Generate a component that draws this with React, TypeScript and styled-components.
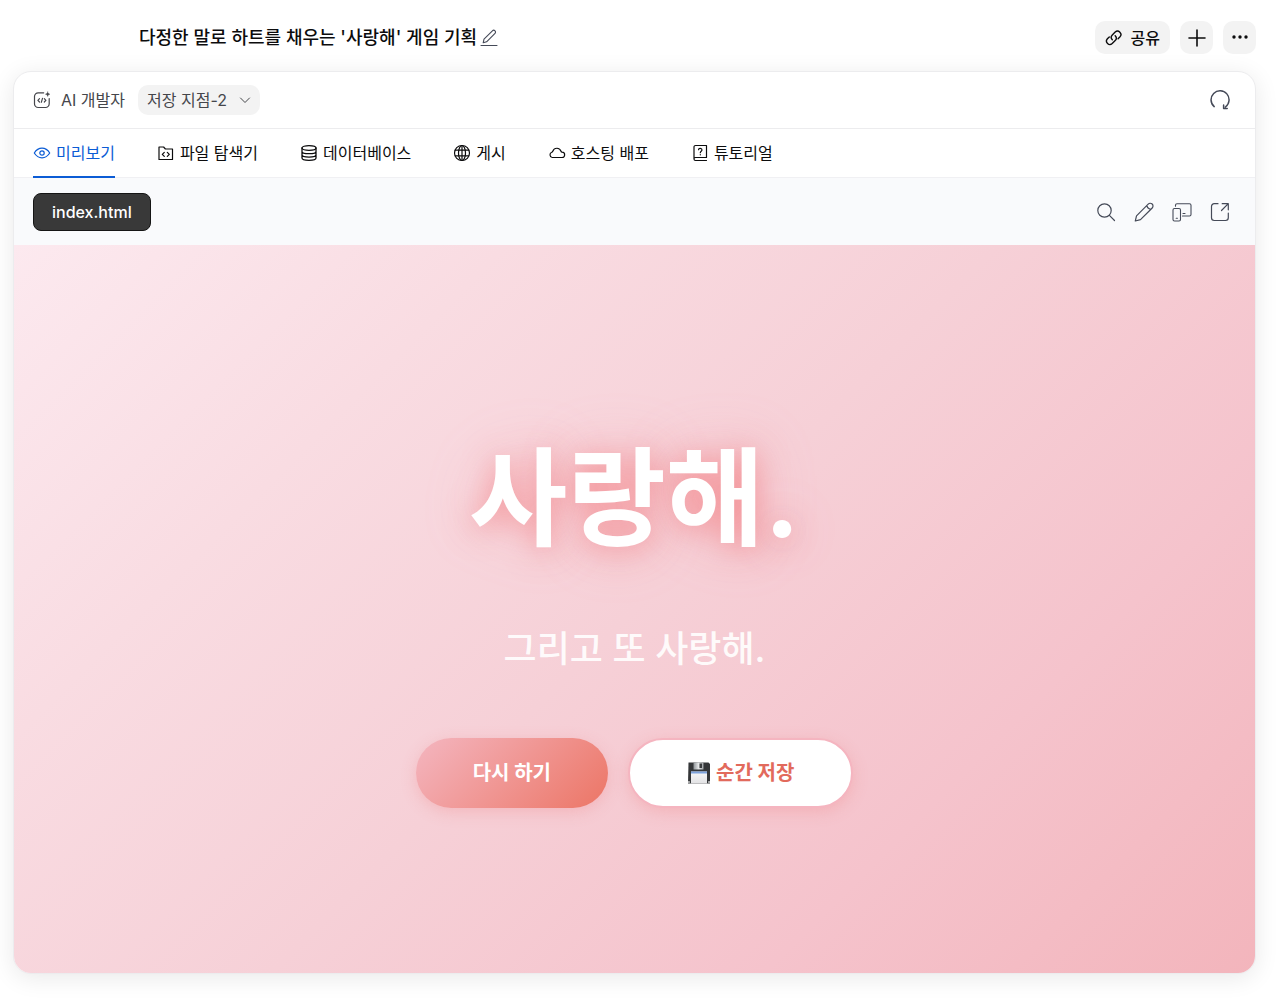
import React from "react";
import styled, { createGlobalStyle } from "styled-components";

const GlobalStyle = createGlobalStyle`
  *, *::before, *::after { box-sizing: border-box; }
  body {
    margin: 0;
    background: #ffffff;
    color: #0c0c0d;
    font-family: Inter, "Noto Sans CJK KR", sans-serif;
    font-size: 16px;
    line-height: 24px;
  }
  button, select { font: inherit; color: inherit; }
`;

const Page = styled.div`
  display: flex;
  flex-direction: column;
  min-height: 100vh;
  padding: 0 24px 29px 13px;
`;

const TopBar = styled.header`
  display: flex;
  align-items: center;
  justify-content: space-between;
  height: 71px;
  padding: 4px 0 0 126px;
`;

const TitleGroup = styled.div`
  display: flex;
  align-items: center;
  gap: 3px;
`;

const PageTitle = styled.h1`
  margin: 0;
  font-size: 18px;
  font-weight: 500;
  line-height: 24px;
`;

const IconButton = styled.button<{ $size?: number }>`
  display: grid;
  place-items: center;
  width: ${(p) => p.$size ?? 20}px;
  height: ${(p) => p.$size ?? 20}px;
  padding: 0;
  border: 0;
  background: none;
  color: #454a58;
  cursor: pointer;
`;

const Actions = styled.div<{ $gap: number }>`
  display: flex;
  align-items: center;
  gap: ${(p) => p.$gap}px;
`;

const SoftButton = styled.button<{ $wide?: boolean }>`
  display: flex;
  align-items: center;
  justify-content: center;
  gap: 8px;
  min-width: 33px;
  height: 33px;
  padding: 0 ${(p) => (p.$wide ? 10 : 0)}px;
  border: 0;
  border-radius: 10px;
  background: #f3f3f3;
  font-weight: 500;
  cursor: pointer;
`;

const Panel = styled.main`
  display: flex;
  flex: 1;
  flex-direction: column;
  overflow: hidden;
  border: 1px solid #ececee;
  border-radius: 18px;
  background: #ffffff;
  box-shadow: 0 4px 24px rgba(0, 0, 0, 0.09);
`;

const PanelHeader = styled.div`
  display: flex;
  align-items: center;
  justify-content: space-between;
  height: 57px;
  padding: 0 25px 0 19px;
  border-bottom: 1px solid #ececee;
`;

const AgentGroup = styled.div`
  display: flex;
  align-items: center;
  gap: 10px;
  color: #45464b;
`;

const SaveField = styled.div`
  display: grid;
  align-items: center;
  margin-left: 3px;
  border-radius: 10px;
  background: #f3f3f3;

  > * { grid-area: 1 / 1; }
  > svg { justify-self: end; margin-right: 9px; pointer-events: none; }
`;

const SaveSelect = styled.select`
  width: 122px;
  height: 30px;
  padding: 0 28px 0 9px;
  border: 0;
  border-radius: 10px;
  background: transparent;
  appearance: none;
  cursor: pointer;
`;

const TabBar = styled.div`
  display: flex;
  gap: 42px;
  height: 49px;
  padding: 0 19px;
  border-bottom: 1px solid #f0f0f3;
`;

const Tab = styled.button<{ $active?: boolean }>`
  display: flex;
  align-items: center;
  gap: 5px;
  height: 49px;
  padding: 0;
  border: 0;
  border-bottom: 2px solid ${(p) => (p.$active ? "#0b5cd5" : "transparent")};
  background: none;
  color: ${(p) => (p.$active ? "#0b5cd5" : "#0c0c0d")};
  white-space: nowrap;
  cursor: pointer;
`;

const FileBar = styled.div`
  display: flex;
  align-items: center;
  justify-content: space-between;
  height: 67px;
  padding: 0 25px 0 19px;
  background: #f9fafc;
`;

const FileButton = styled.button`
  height: 38px;
  padding: 0 18px;
  border: 1px solid #151515;
  border-radius: 8px;
  background: #393939;
  color: #ffffff;
  font-weight: 500;
  cursor: pointer;
`;

const Preview = styled.section`
  display: flex;
  flex: 1;
  flex-direction: column;
  align-items: center;
  justify-content: center;
  padding: 32px;
  background: linear-gradient(135deg, #fce9ef 0%, #f9dce2 25%, #f6d0d7 50%, #f5c3cc 75%, #f3b5bc 100%);
  color: #ffffff;
  text-align: center;
`;

const Headline = styled.h2`
  margin: 0 0 38px;
  padding-top: 2px;
  font-size: 107px;
  font-weight: 700;
  line-height: 172px;
  text-shadow: 0 4px 30px rgba(240, 90, 90, 0.55), 0 0 60px rgba(244, 160, 175, 0.3);
`;

const Subline = styled.p`
  margin: 0 0 62px;
  font-size: 36px;
  font-weight: 500;
  line-height: 54px;
  opacity: 0.9;
`;

const PillButton = styled.button<{ $outlined?: boolean }>`
  display: flex;
  align-items: center;
  gap: 5px;
  height: 70px;
  padding: 0 57px;
  border: ${(p) => (p.$outlined ? "2px solid #f5b5c0" : "0")};
  border-radius: 35px;
  background: ${(p) => (p.$outlined ? "#ffffff" : "linear-gradient(135deg, #f4b6c0, #ec7565)")};
  color: ${(p) => (p.$outlined ? "#e26a5c" : "#ffffff")};
  box-shadow: 0 4px 15px rgba(240, 128, 128, 0.3);
  font-size: 20px;
  font-weight: 700;
  white-space: nowrap;
  cursor: pointer;
`;

type IconProps = { size?: number; width?: number; children: React.ReactNode };

function Icon({ size = 18, width = 1.2, children }: IconProps) {
  return (
    <svg
      width={size}
      height={size}
      viewBox={`0 0 ${size} ${size}`}
      fill="none"
      stroke="currentColor"
      strokeWidth={width}
      strokeLinecap="round"
      strokeLinejoin="round"
      aria-hidden="true"
    >
      {children}
    </svg>
  );
}

const EditIcon = () => (
  <Icon size={18} width={1.1}>
    <path d="M3.200 13.800 4 10.200l8.400-8.400a1.800 1.800 0 0 1 2.600 2.600l-8.400 8.400ZM1 16.500h16" />
  </Icon>
);
const LinkIcon = () => (
  <Icon size={18} width={1.400}>
    <path d="M7.300 10.700a3.400 3.400 0 0 1 0-4.800l2.900-2.900A3.400 3.400 0 0 1 15 7.800l-1.900 1.900" />
    <path d="M10.200 6.800a3.400 3.400 0 0 1 0 4.800l-3 3a3.400 3.400 0 0 1-4.800-4.800l1.900-1.900" />
  </Icon>
);
const PlusIcon = () => (
  <Icon size={18} width={1.6}><path d="M9 1v16M1 9h16" /></Icon>
);
const MoreIcon = () => (
  <Icon size={18}>
    <g fill="currentColor" stroke="none">
      <circle cx="3" cy="8" r="1.700" /><circle cx="9" cy="8" r="1.700" /><circle cx="15" cy="8" r="1.700" />
    </g>
  </Icon>
);
const AgentIcon = () => (
  <Icon size={18} width={1.200}>
    <path d="M10.700 1.800H5.200A3.700 3.700 0 0 0 1.500 5.500v7.300a3.700 3.700 0 0 0 3.700 3.700h7.300a3.700 3.700 0 0 0 3.700-3.700V7.600" />
    <path d="m6.500 7.600-1.600 1.700 1.600 1.700M11.300 7.600l1.600 1.700-1.600 1.700M9.500 7.300l-1.200 4" />
    <path d="M14.700.8c.3 1.500.8 2 2.300 2.400-1.500.3-2 .8-2.300 2.400-.3-1.600-.9-2.100-2.400-2.400 1.500-.4 2.100-.9 2.400-2.400Z" fill="currentColor" strokeWidth=".3" />
  </Icon>
);
const ChevronIcon = () => (
  <Icon size={12} width={1}><path d="m1.500 4 4.500 4.500L10.500 4" /></Icon>
);
const RefreshIcon = () => (
  <Icon size={20} width={1.500}>
    <path d="M4.200 16.600A9 9 0 1 1 15.400 17M13.600 15v3.600h3.600" />
  </Icon>
);
const EyeIcon = () => (
  <Icon size={18} width={1.200}>
    <path d="M1.300 9C3.300 5.800 6 4.200 9 4.200S14.700 5.800 16.700 9C14.700 12.200 12 13.800 9 13.800S3.300 12.200 1.300 9Z" />
    <circle cx="9" cy="9" r="2.200" />
  </Icon>
);
const FolderIcon = () => (
  <Icon size={18}>
    <path d="M2 15.500V3h4.600l1.800 2H15.500v10.500ZM7.300 8.300l-2 2 2 2M10.300 8.300l2 2-2 2" />
  </Icon>
);
const DatabaseIcon = () => (
  <Icon size={18} width={1.300}>
    <ellipse cx="9" cy="4" rx="7" ry="2.300" />
    <path d="M2 4v10c0 1.300 3.100 2.300 7 2.300s7-1 7-2.300V4M2 7.400c0 1.300 3.100 2.300 7 2.300s7-1 7-2.300M2 10.800c0 1.300 3.100 2.300 7 2.300s7-1 7-2.300" />
  </Icon>
);
const GlobeIcon = () => (
  <Icon size={18}>
    <circle cx="9" cy="9" r="7.500" />
    <ellipse cx="9" cy="9" rx="3.500" ry="7.500" />
    <path d="M2.300 6.200h13.400M2.300 11.800h13.400M9 1.500v15" />
  </Icon>
);
const CloudIcon = () => (
  <Icon size={18}>
    <path d="M4.200 13.500h9.600a2.700 2.700 0 0 0 .3-5.400c-.7-.1-.9-.3-1.100-.9A4.300 4.300 0 0 0 4.900 7c-.2.800-.5 1.100-1.100 1.300a2.700 2.700 0 0 0 .4 5.200Z" />
  </Icon>
);
const TutorialIcon = () => (
  <Icon size={18}>
    <path d="M15.500 13.500v-12h-11A1.500 1.500 0 0 0 3 3v12c0 1 .6 1.500 1.500 1.500h11M3 14.700c.1-.8.700-1.200 1.500-1.200h11" />
    <path d="M7.500 5.700C7.700 3.800 11 4 11 6c0 1.200-1.700 1.300-1.700 2.700M9.300 10.700v.1" />
  </Icon>
);
const SearchIcon = () => (
  <Icon size={20}><circle cx="8.500" cy="8.500" r="6.700" /><path d="m13.400 13.400 5.100 5.100" /></Icon>
);
const PencilIcon = () => (
  <Icon size={20}>
    <path d="M1.300 19 2.500 13.800 14.200 2.100a2.700 2.700 0 0 1 4 3.900L6.500 17.700ZM12.900 3.400c.3 2.100 1.700 3.500 3.900 3.900" />
  </Icon>
);
const DevicesIcon = () => (
  <Icon size={20} width={1.100}>
    <path d="M3.500 4.300V3.200c0-.9.600-1.500 1.500-1.500h12.500c.9 0 1.500.6 1.500 1.500v9.300c0 .9-.6 1.500-1.500 1.500H10.500M11 11.500h2" />
    <rect x="1" y="6.500" width="7.500" height="12.500" rx="1.500" />
    <path d="M4.200 16.300h1.200" />
  </Icon>
);
const OpenIcon = () => (
  <Icon size={20}>
    <path d="M8 1.700H4.200a2.700 2.700 0 0 0-2.700 2.700v11.400a2.700 2.700 0 0 0 2.700 2.700h11.400a2.700 2.700 0 0 0 2.700-2.700V11M12.200 1.700h6.100v6.100M18.300 1.700l-6.800 6.800" />
  </Icon>
);

const FloppyIcon = () => (
  <svg width="24" height="24" viewBox="0 0 24 24" aria-hidden="true">
    <defs>
      <linearGradient id="shutter" x1="0" y1="0" x2="1" y2="0">
        <stop offset="0" stopColor="#8f9498" />
        <stop offset="0.5" stopColor="#e6e8e9" />
        <stop offset="1" stopColor="#9da1a4" />
      </linearGradient>
      <linearGradient id="label" x1="0" y1="0" x2="0" y2="1">
        <stop offset="0" stopColor="#f8f8f9" />
        <stop offset="1" stopColor="#e2e2e4" />
      </linearGradient>
    </defs>
    <path d="M1.500 1.500h20L23 3v19.500H1Z" fill="#343638" />
    <rect x="6.500" y="1.500" width="10" height="7" fill="url(#shutter)" />
    <rect x="12.500" y="2.500" width="2.500" height="4.500" fill="#3a3c3e" />
    <rect x="4" y="10.500" width="16" height="12" fill="url(#label)" />
    <rect x="4" y="10.500" width="16" height="2" fill="#7da2dc" />
    <path d="M1.200 20h1.500v2H1.200ZM21.300 20h1.500v2h-1.500Z" fill="#c8c9ca" />
  </svg>
);

const tabs = [
  { label: "미리보기", icon: <EyeIcon /> },
  { label: "파일 탐색기", icon: <FolderIcon /> },
  { label: "데이터베이스", icon: <DatabaseIcon /> },
  { label: "게시", icon: <GlobeIcon /> },
  { label: "호스팅 배포", icon: <CloudIcon /> },
  { label: "튜토리얼", icon: <TutorialIcon /> },
];

export default function App() {
  const [active, setActive] = React.useState(0);
  return (
    <>
      <GlobalStyle />
      <Page>
        <TopBar>
          <TitleGroup>
            <PageTitle>다정한 말로 하트를 채우는 '사랑해' 게임 기획</PageTitle>
            <IconButton $size={18} aria-label="제목 편집"><EditIcon /></IconButton>
          </TitleGroup>
          <Actions $gap={10}>
            <SoftButton $wide><LinkIcon />공유</SoftButton>
            <SoftButton aria-label="추가"><PlusIcon /></SoftButton>
            <SoftButton aria-label="더보기"><MoreIcon /></SoftButton>
          </Actions>
        </TopBar>

        <Panel>
          <PanelHeader>
            <AgentGroup>
              <AgentIcon />
              <span>AI 개발자</span>
              <SaveField>
                <SaveSelect aria-label="저장 지점" defaultValue="2">
                  <option value="2">저장 지점-2</option>
                </SaveSelect>
                <ChevronIcon />
              </SaveField>
            </AgentGroup>
            <IconButton aria-label="새로고침"><RefreshIcon /></IconButton>
          </PanelHeader>

          <TabBar role="tablist">
            {tabs.map((tab, i) => (
              <Tab
                key={tab.label}
                role="tab"
                aria-selected={i === active}
                $active={i === active}
                onClick={() => setActive(i)}
              >
                {tab.icon}
                {tab.label}
              </Tab>
            ))}
          </TabBar>

          <FileBar>
            <FileButton>index.html</FileButton>
            <Actions $gap={18}>
              <IconButton aria-label="검색"><SearchIcon /></IconButton>
              <IconButton aria-label="편집"><PencilIcon /></IconButton>
              <IconButton aria-label="기기 보기"><DevicesIcon /></IconButton>
              <IconButton aria-label="새 창에서 열기"><OpenIcon /></IconButton>
            </Actions>
          </FileBar>

          <Preview>
            <Headline>사랑해.</Headline>
            <Subline>그리고 또 사랑해.</Subline>
            <Actions $gap={20}>
              <PillButton>다시 하기</PillButton>
              <PillButton $outlined><FloppyIcon />순간 저장</PillButton>
            </Actions>
          </Preview>
        </Panel>
      </Page>
    </>
  );
}
